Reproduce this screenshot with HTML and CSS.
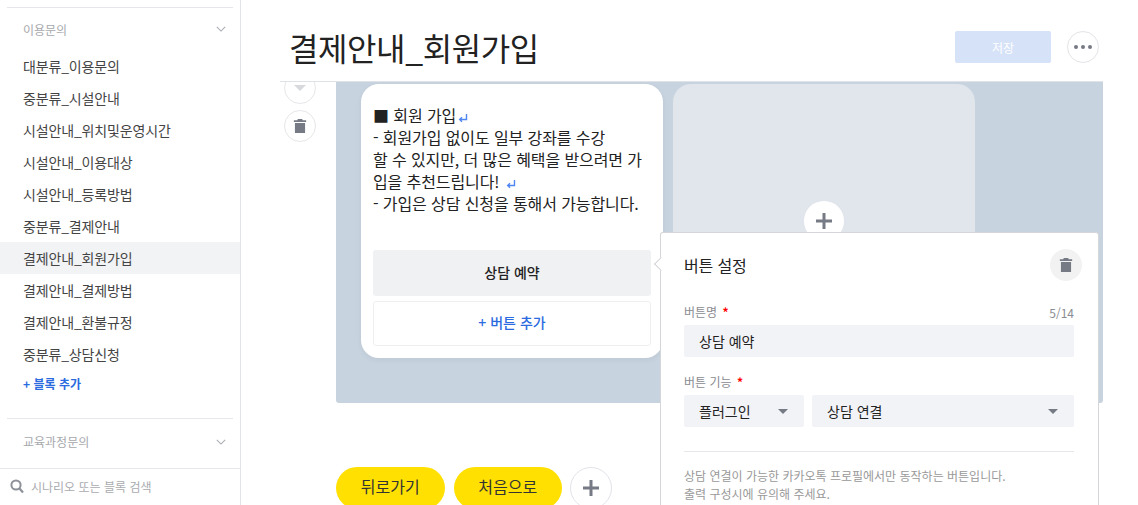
FILE: index.html
```html
<!DOCTYPE html>
<html lang="ko">
  <head>
    <meta charset="UTF-8" />
    <meta name="viewport" content="width=device-width, initial-scale=1.0" />
    <title>결제안내_회원가입</title>
    <link rel="stylesheet" href="styles.css">
  </head>
  <body>
    <aside class="sidebar">
      <div class="side-scroll">
        <div class="group-title">
          <span>이용문의</span>
          <svg class="chevron" width="10" height="6" viewBox="0 0 12 7"><path d="M1 1l5 5 5-5" fill="none" stroke="#a9acb3" stroke-width="1.300"/></svg>
        </div>
        <ul class="block-list">
          <li>대분류_이용문의</li>
          <li>중분류_시설안내</li>
          <li>시설안내_위치및운영시간</li>
          <li>시설안내_이용대상</li>
          <li>시설안내_등록방법</li>
          <li>중분류_결제안내</li>
          <li class="active">결제안내_회원가입</li>
          <li>결제안내_결제방법</li>
          <li>결제안내_환불규정</li>
          <li>중분류_상담신청</li>
        </ul>
        <a class="add-block">+ 블록 추가</a>
        <div class="group-title second">
          <span>교육과정문의</span>
          <svg class="chevron" width="10" height="6" viewBox="0 0 12 7"><path d="M1 1l5 5 5-5" fill="none" stroke="#a9acb3" stroke-width="1.300"/></svg>
        </div>
      </div>
      <div class="search">
        <svg width="14" height="15" viewBox="0 0 14 15"><circle cx="6" cy="6" r="4.600" fill="none" stroke="#8e9199" stroke-width="2"/><path d="M9.500 9.500l3.500 4" stroke="#8e9199" stroke-width="2.200"/></svg>
        <span>시나리오 또는 블록 검색</span>
      </div>
    </aside>

    <main class="main">
      <header class="head">
        <h1>결제안내_회원가입</h1>
        <button class="save">저장</button>
        <button class="more"><i></i><i></i><i></i></button>
      </header>

      <div class="workspace">
        <div class="tools">
          <div class="tool tool-down"><span class="tri"></span></div>
          <div class="tool">
            <svg width="16" height="18" viewBox="0 0 16 18"><path d="M5.500 1h5l.6 1.400H15v2H1v-2h3.900zM2.200 5.500h11.600V17H2.200z" fill="#767a85"/></svg>
          </div>
        </div>
        <div class="canvas">
          <div class="card">
            <div class="card-text">
              ■ 회원 가입<svg class="ret" width="10" height="10" viewBox="0 0 10 10"><path d="M8.500 1v5.500H2M4 4.300L1.700 6.500 4 8.700" fill="none" stroke="#4f86f0" stroke-width="1.400"/></svg><br>
              - 회원가입 없이도 일부 강좌를 수강<br>
              할 수 있지만, 더 많은 혜택을 받으려면 가<br>
              입을 추천드립니다! <svg class="ret" width="10" height="10" viewBox="0 0 10 10"><path d="M8.500 1v5.500H2M4 4.300L1.700 6.500 4 8.700" fill="none" stroke="#4f86f0" stroke-width="1.400"/></svg><br>
              - 가입은 상담 신청을 통해서 가능합니다.
            </div>
            <div class="card-btn selected">상담 예약</div>
            <div class="card-btn add">+ 버튼 추가</div>
          </div>
          <div class="card empty">
            <div class="plus-circle">
              <svg width="18" height="18" viewBox="0 0 18 18"><path d="M9 1v16M1 9h16" stroke="#767a85" stroke-width="3"/></svg>
            </div>
          </div>
        </div>
      </div>

      <div class="quick">
        <button class="quick-btn">뒤로가기</button>
        <button class="quick-btn">처음으로</button>
        <button class="quick-add">
          <svg width="20" height="20" viewBox="0 0 20 20"><path d="M10 2v16M2 10h16" stroke="#767a85" stroke-width="3"/></svg>
        </button>
      </div>

      <section class="popover">
        <div class="pop-head">
          <h2>버튼 설정</h2>
          <div class="pop-trash">
            <svg width="16" height="18" viewBox="0 0 16 18"><path d="M5.500 1h5l.6 1.400H15v2H1v-2h3.900zM2.200 5.500h11.600V17H2.200z" fill="#767a85"/></svg>
          </div>
        </div>
        <div class="label-row">
          <label>버튼명 <em>*</em></label>
          <span class="count">5/14</span>
        </div>
        <div class="field">상담 예약</div>
        <div class="label-row second">
          <label>버튼 기능 <em>*</em></label>
        </div>
        <div class="select-row">
          <div class="field select small">플러그인<span class="tri"></span></div>
          <div class="field select">상담 연결<span class="tri"></span></div>
        </div>
        <p class="note">상담 연결이 가능한 카카오톡 프로필에서만 동작하는 버튼입니다.<br>출력 구성시에 유의해 주세요.</p>
      </section>
    </main>
  </body>
</html>
```

FILE: styles.css
```css
* {
  box-sizing: border-box;
}
html,
body {
  height: 505px;
  overflow: hidden;
}
body {
  margin: 0;
  display: flex;
  background: #fff;
  color: #222;
  font-family: "Noto Sans CJK KR", "Noto Sans", sans-serif;
  font-size: 14px;
}
button {
  font-family: inherit;
  cursor: pointer;
}

/* sidebar */
.sidebar {
  width: 241px;
  flex: none;
  display: flex;
  flex-direction: column;
  border-right: 1px solid #e2e3e8;
}
.side-scroll {
  flex: 1;
  min-height: 0;
  padding-top: 7px;
}
.group-title {
  margin: 0 7px;
  height: 43px;
  padding: 0 7px 0 16px;
  display: flex;
  align-items: center;
  justify-content: space-between;
  border-top: 1px solid #e6e7ea;
  color: #a6a8ad;
  font-size: 12px;
}
.group-title.second {
  margin-top: 20px;
  height: 50px;
  padding: 0 7px 4px 16px;
}
.block-list {
  list-style: none;
  margin: 0;
  padding: 0;
}
.block-list li {
  height: 32px;
  line-height: 32px;
  padding-left: 23px;
  letter-spacing: -0.15px;
  color: #444;
}
.block-list li.active {
  background: #f2f3f5;
}
.add-block {
  display: block;
  height: 28px;
  line-height: 28px;
  padding-left: 23px;
  color: #2b6be0;
  font-size: 12px;
  font-weight: 700;
}
.search {
  height: 37px;
  flex: none;
  padding: 0 10px 2px;
  display: flex;
  align-items: center;
  gap: 7px;
  border-top: 1px solid #e6e7ea;
  color: #a9abb0;
  font-size: 12px;
}

/* main area */
.main {
  flex: 1;
  min-width: 0;
  height: 505px;
  overflow: hidden;
  position: relative;
  padding: 0 35px 0 39px;
}
.head {
  height: 82px;
  display: flex;
  align-items: center;
  border-bottom: 1px solid #dfe2e6;
  padding: 13px 4px 0 9px;
}
.head h1 {
  margin: 0;
  flex: 1;
  font-size: 32px;
  font-weight: 400;
  letter-spacing: -0.4px;
  color: #222;
}
.save {
  width: 96px;
  height: 32px;
  margin-right: 16px;
  border: 0;
  border-radius: 2px;
  background: #d6e2f8;
  color: #fff;
  font-size: 12px;
}
.more {
  width: 32px;
  height: 32px;
  padding: 0;
  display: flex;
  align-items: center;
  justify-content: center;
  gap: 3px;
  border: 1px solid #e4e4e8;
  border-radius: 50%;
  background: #fff;
}
.more i {
  width: 4px;
  height: 4px;
  border-radius: 50%;
  background: #767a85;
}

.workspace {
  height: 321px;
  display: flex;
  overflow: hidden;
}
.tools {
  width: 32px;
  margin: -10px 20px 0 4px;
  display: flex;
  flex-direction: column;
  gap: 6px;
}
.tool {
  width: 32px;
  height: 32px;
  flex: none;
  display: flex;
  align-items: center;
  justify-content: center;
  border: 1px solid #e6e7ea;
  border-radius: 50%;
  background: #fff;
}
.tool svg {
  width: 14px;
  height: 16px;
}
.tool-down .tri {
  border-left-width: 6px;
  border-right-width: 6px;
  border-top: 6px solid #d8d9dc;
}
.tri {
  width: 0;
  height: 0;
  border-left: 5px solid transparent;
  border-right: 5px solid transparent;
  border-top: 5px solid #767a85;
}
.canvas {
  flex: 1;
  display: flex;
  gap: 10px;
  padding: 2px 0 0 25px;
  background: #c7d3df;
  border-radius: 0 0 3px 3px;
}
.card {
  width: 302px;
  height: 274px;
  display: flex;
  flex-direction: column;
  padding: 20px 12px 12px;
  border-radius: 18px;
  background: #fff;
  box-shadow: 0 2px 6px rgba(0, 0, 0, 0.05);
}
.card.empty {
  background: #e1e5ec;
  align-items: center;
  padding-top: 117px;
  box-shadow: none;
}
.card-text {
  height: 146px;
  font-size: 16px;
  letter-spacing: -0.1px;
  line-height: 22px;
  color: #222;
}
.ret {
  margin-left: 2px;
  vertical-align: -1px;
}
.card-btn {
  height: 45px;
  flex: none;
  display: flex;
  align-items: center;
  justify-content: center;
  border-radius: 3px;
  font-size: 14px;
  font-weight: 500;
}
.card-btn.selected {
  background: #f0f1f3;
  color: #222;
  height: 46px;
  padding-bottom: 2px;
}
.card-btn.add {
  margin-top: 5px;
  padding-bottom: 3px;
  border: 1px solid #eeeff1;
  color: #2b6be0;
}
.plus-circle {
  width: 40px;
  height: 40px;
  display: flex;
  align-items: center;
  justify-content: center;
  border-radius: 50%;
  background: #fff;
}

.quick {
  margin: 64px 0 0 56px;
  display: flex;
  gap: 9px;
  align-items: flex-start;
}
.quick-btn {
  width: 108.5px;
  height: 42px;
  padding: 0 0 4px;
  border: 0;
  border-radius: 21px;
  background: #ffe000;
  color: #333;
  font-size: 16px;
}
.quick-add {
  width: 42px;
  height: 42px;
  margin-left: -1px;
  padding: 0;
  display: flex;
  align-items: center;
  justify-content: center;
  border: 1px solid #e2e3ea;
  border-radius: 50%;
  background: #fff;
}

/* button settings popover */
.popover {
  position: absolute;
  left: 419px;
  top: 232px;
  width: 439px;
  height: 273px;
  padding: 16px 24px 0 23px;
  border: 1px solid #d4d6da;
  border-bottom: 0;
  border-radius: 3px 3px 0 0;
  background: #fff;
}
.popover::before {
  content: "";
  position: absolute;
  left: -5px;
  top: 26px;
  width: 9px;
  height: 9px;
  background: #fff;
  border-left: 1px solid #d4d6da;
  border-bottom: 1px solid #d4d6da;
  transform: rotate(45deg);
}
.pop-head {
  height: 32px;
  display: flex;
  align-items: center;
  justify-content: space-between;
  margin-right: -8px;
}
.pop-head h2 {
  margin: 0;
  font-size: 16px;
  font-weight: 400;
  letter-spacing: -0.15px;
  color: #222;
}
.pop-trash {
  width: 32px;
  height: 32px;
  display: flex;
  align-items: center;
  justify-content: center;
  border-radius: 50%;
  background: #f2f2f3;
}
.pop-trash svg {
  width: 14px;
  height: 16px;
}
.label-row {
  margin-top: 18px;
  height: 26px;
  padding-bottom: 2px;
  display: flex;
  align-items: center;
  justify-content: space-between;
  font-size: 12px;
  color: #8a8c91;
}
.label-row.second {
  margin-top: 12px;
}
.label-row em {
  color: #f00;
  font-style: normal;
  font-weight: 700;
  margin-left: 2px;
}
.count {
  padding-top: 2px;
}
.field {
  height: 32px;
  padding: 0 15px;
  display: flex;
  align-items: center;
  background: #f2f3f7;
  border-radius: 2px;
  font-size: 14px;
  color: #222;
}
.select-row {
  display: flex;
  gap: 8px;
}
.select {
  flex: 1;
  justify-content: space-between;
  padding-right: 16px;
}
.select.small {
  flex: none;
  width: 120px;
}
.note {
  margin: 24px 0 0;
  padding-top: 15px;
  border-top: 1px solid #e6e7ea;
  font-size: 12px;
  line-height: 18px;
  color: #999;
}
```
